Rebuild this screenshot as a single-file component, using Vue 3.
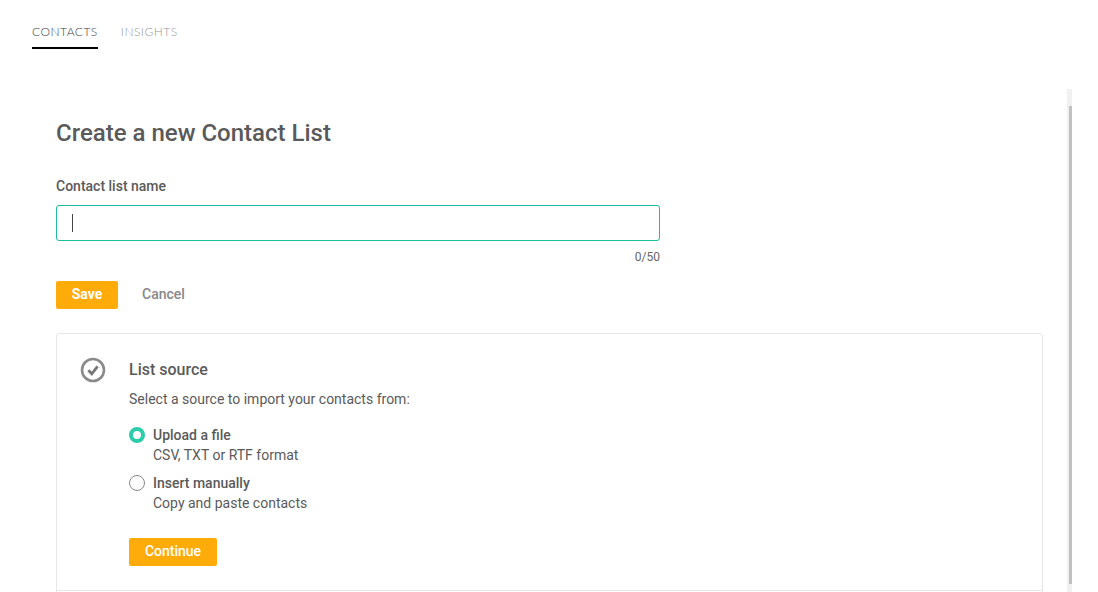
<script setup>
const sources = [
  { id: 'file', title: 'Upload a file', hint: 'CSV, TXT or RTF format', on: true },
  { id: 'manual', title: 'Insert manually', hint: 'Copy and paste contacts', on: false },
]
</script>

<template>
  <div class="page">
    <nav class="tabs">
      <a class="tab active">CONTACTS</a>
      <a class="tab">INSIGHTS</a>
    </nav>
    <div class="scroller">
      <main class="content">
        <h1 class="title">Create a new Contact List</h1>
        <label class="label">Contact list name</label>
        <div class="input"><span class="caret"></span></div>
        <div class="counter">0/50</div>
        <div class="actions">
          <button class="btn save">Save</button>
          <button class="cancel">Cancel</button>
        </div>
        <section class="card">
          <svg class="check" width="26" height="26" viewBox="0 0 26 26">
            <circle cx="13" cy="13" r="11" fill="none" stroke="#8a8a8a" stroke-width="2.6" />
            <path d="M8.4 13.2l3.4 3.6 5.8-7.4" fill="none" stroke="#777" stroke-width="2.8" />
          </svg>
          <div class="body">
            <h2 class="card-title">List source</h2>
            <p class="desc">Select a source to import your contacts from:</p>
            <div class="options">
              <div v-for="s in sources" :key="s.id" class="option">
                <span class="radio" :class="{ on: s.on }"></span>
                <div>
                  <div class="opt-title">{{ s.title }}</div>
                  <div class="opt-hint">{{ s.hint }}</div>
                </div>
              </div>
            </div>
            <button class="btn continue">Continue</button>
          </div>
        </section>
        <section class="card next"></section>
      </main>
      <div class="track"><div class="thumb"></div></div>
    </div>
  </div>
</template>

<style>
html, body { margin: 0; overflow: hidden; background: #fff; }
</style>

<style scoped>
.page {
  height: 592px;
  overflow: hidden;
  font-family: Roboto, "Liberation Sans", sans-serif;
  color: #5a5a5a;
  background: #fff;
}
.tabs {
  display: flex;
  gap: 23px;
  padding: 24px 0 0 32px;
  height: 89px;
  box-sizing: border-box;
}
.tab {
  height: 25px;
  box-sizing: border-box;
  font-family: Lato, sans-serif;
  font-weight: 300;
  font-size: 12px;
  line-height: 15px;
  letter-spacing: 0.5px;
  color: #999;
}
.tab.active {
  color: #444;
  border-bottom: 2px solid #000;
}
.scroller {
  position: relative;
  width: 1072px;
  height: 503px;
  overflow: hidden;
}
.content {
  padding: 29px 29px 0 56px;
}
.title {
  margin: 0;
  font-size: 24px;
  font-weight: 500;
  line-height: 30px;
  color: #5a5a5a;
}
.label {
  display: block;
  margin-top: 28px;
  font-size: 14px;
  font-weight: 500;
  line-height: 20px;
  color: #5a5a5a;
}
.input {
  width: 604px;
  height: 36px;
  margin-top: 9px;
  box-sizing: border-box;
  border: 1px solid #1cbc9c;
  border-radius: 3px;
  padding: 8px 15px;
  display: flex;
}
.caret {
  width: 1px;
  height: 18px;
  background: #444;
}
.counter {
  width: 604px;
  margin-top: 8px;
  text-align: right;
  font-size: 12px;
  line-height: 16px;
  color: #666;
}
.actions {
  display: flex;
  align-items: center;
  gap: 24px;
  margin-top: 16px;
}
.btn {
  height: 28px;
  border: 0;
  border-radius: 2px;
  background: #ffab0a;
  color: #fff;
  font: 700 14px/20px Roboto, sans-serif;
  padding: 0 0 2px;
}
.save { width: 62px; }
.continue { width: 88px; font-weight: 500; }
.cancel {
  border: 0;
  background: none;
  padding: 0 0 2px;
  font: 500 14px/20px Roboto, sans-serif;
  height: 28px;
  color: #888;
}
.card {
  display: flex;
  margin-top: 24px;
  height: 258px;
  box-sizing: border-box;
  border: 1px solid #e6e6e6;
  border-radius: 3px 3px 0 0;
  padding: 24px 23px;
  gap: 23px;
}
.card.next {
  margin-top: -1px;
  border-radius: 0;
  height: 60px;
}
.check { flex: none; margin-top: -1px; }
.card-title {
  margin: 0;
  font-size: 16px;
  font-weight: 500;
  line-height: 24px;
  color: #5a5a5a;
}
.desc {
  margin: 7px 0 0;
  font-size: 14px;
  line-height: 20px;
  color: #5a5a5a;
}
.options {
  display: flex;
  flex-direction: column;
  gap: 8px;
  margin-top: 16px;
}
.option {
  display: flex;
  gap: 8px;
  font-size: 14px;
  line-height: 20px;
}
.opt-title { font-weight: 500; }
.radio {
  flex: none;
  width: 16px;
  height: 16px;
  margin-top: 2px;
  box-sizing: border-box;
  border: 1px solid #888;
  border-radius: 50%;
}
.radio.on {
  border: 4px solid #2accaa;
}
.continue { margin-top: 25px; display: block; }
.track {
  position: absolute;
  top: 0;
  right: 0;
  bottom: 0;
  width: 5px;
  background: #f1f1f1;
}
.thumb {
  position: absolute;
  top: 17px;
  right: 0;
  width: 3px;
  height: 478px;
  background: #c1c1c1;
}
</style>
